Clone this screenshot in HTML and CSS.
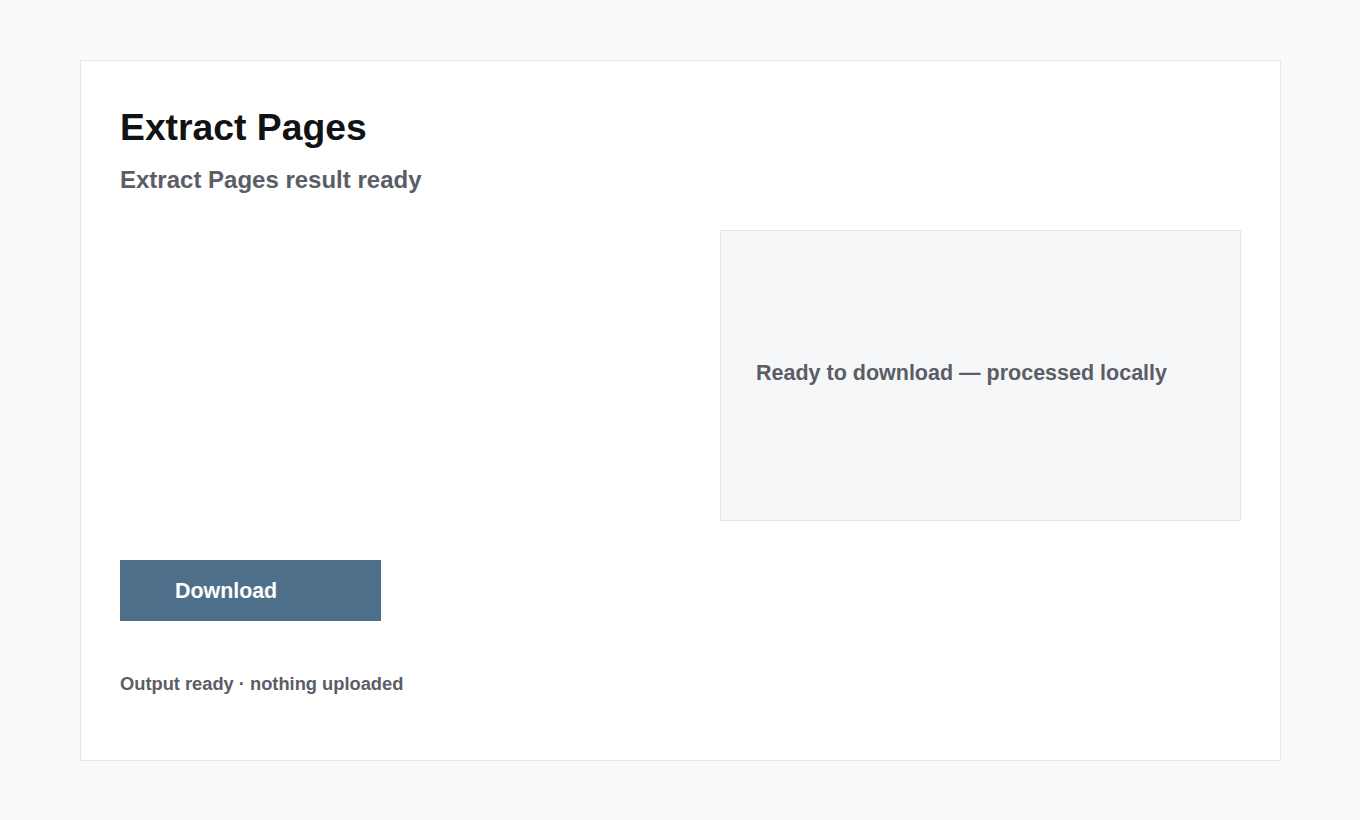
FILE: index.html
```html
<!DOCTYPE html>
<html>
	<head>
		<meta charset="utf-8">
		<title>Extract Pages</title>
		<link rel="stylesheet" href="styles.css">
	</head>
	<body>
		<div class="card">
			<h1>Extract Pages</h1>
			<h2 class="subtitle">Extract Pages result ready</h2>

			<div class="result">
				<div class="result-left"></div>
				<div class="preview">Ready to download — processed locally</div>
			</div>

			<button class="download">Download</button>

			<div class="status">Output ready · nothing uploaded</div>
		</div>
	</body>
</html>
```

FILE: styles.css
```css
html {
	background-color: #f9fafb;
}

body {
	margin: 0;
	padding: 60px 79px 60px 80px;
	font-family: "Liberation Sans", Arial, sans-serif;
	color: #111214;
}

.card {
	background-color: #fff;
	border: 1px solid #e6e8eb;
	padding: 39px;
	height: 621px;
}

h1 {
	margin: 0;
	font-size: 37.3px;
	line-height: 54px;
	font-weight: bold;
	color: #111214;
}

.subtitle {
	margin: 10px 0 0 0;
	font-size: 24px;
	line-height: 31px;
	font-weight: bold;
	color: #5a5d66;
}

.result {
	display: grid;
	grid-template-columns: 520px 1fr;
	gap: 80px;
	margin-top: 35px;
}

.preview {
	box-sizing: border-box;
	height: 291px;
	background-color: #f6f7f8;
	border: 1px solid #e4e6e8;
	padding: 0 35px 4px 35px;
	display: flex;
	align-items: center;
	font-size: 21.5px;
	font-weight: bold;
	color: #5a5d66;
}

.download {
	display: block;
	margin-top: 39px;
	width: 261px;
	height: 61px;
	border: 0;
	border-radius: 0;
	background-color: #4e6f8a;
	color: #fff;
	font-family: "Liberation Sans", Arial, sans-serif;
	font-size: 21.4px;
	font-weight: bold;
	text-align: left;
	padding: 2px 0 0 55px;
}

.status {
	margin-top: 49px;
	font-size: 18.3px;
	line-height: 27px;
	font-weight: bold;
	color: #5a5d66;
}
```
